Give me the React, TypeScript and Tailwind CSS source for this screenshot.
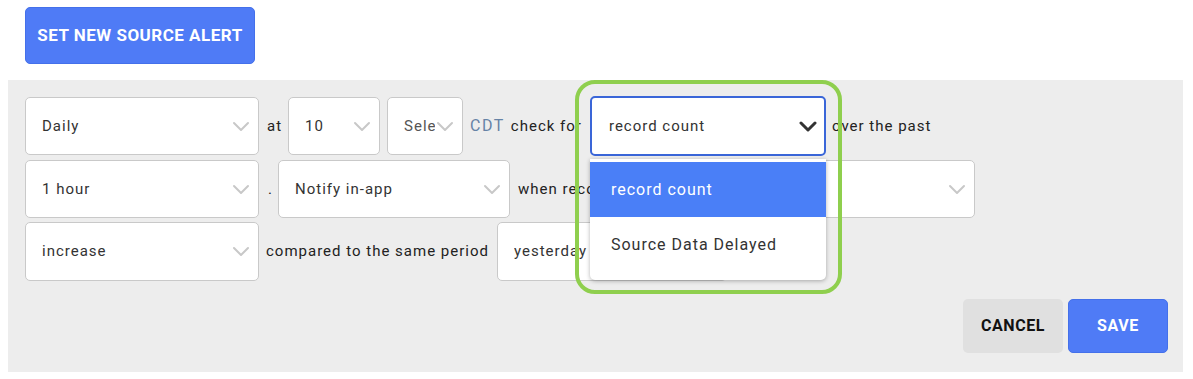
const font = { fontFamily: "Roboto, 'Liberation Sans', sans-serif" }

const Chevron = ({ dark }: { dark?: boolean }) => (
  <svg width="18" height="11" viewBox="0 0 18 11" className="shrink-0">
    <polyline
      points="2,2 9,9 16,2"
      fill="none"
      stroke={dark ? '#333333' : '#c8c8c8'}
      strokeWidth={dark ? 3 : 2}
      strokeLinecap="round"
      strokeLinejoin="round"
    />
  </svg>
)

const Select = ({ value, className, textWidth, muted }: { value: string; className: string; textWidth?: string; muted?: boolean }) => (
  <div className={`h-[58px] flex items-center justify-between bg-white border border-[#c9c9c9] rounded-[5px] pl-[16px] pr-[8px] overflow-hidden shrink-0 ${className}`}>
    <span className={`text-[15px] tracking-[1px] whitespace-nowrap overflow-hidden ${textWidth ?? ''} ${muted ? 'text-[#555]' : 'text-[#333]'}`}>{value}</span>
    <Chevron />
  </div>
)

const Label = ({ children, className = '' }: { children: React.ReactNode; className?: string }) => (
  <span className={`text-[15px] tracking-[1px] text-[#222] whitespace-nowrap shrink-0 ${className}`}>{children}</span>
)

export default function App() {
  return (
    <div className="w-[1193px] h-[379px] bg-white overflow-hidden" style={font}>
      <div className="pt-[7px] pl-[25px]">
        <button className="h-[57px] w-[230px] rounded-[5px] bg-[#4f7bf6] border border-[#4470ea] text-white font-bold text-[17px] tracking-[0.5px]">
          SET NEW SOURCE ALERT
        </button>
      </div>

      <div className="mt-[16px] ml-[8px] w-[1175px] h-[292px] bg-[#ededed] pt-[17px] pl-[17px] pr-[15px]">
        {/* row 1 */}
        <div className="flex items-center h-[58px]">
          <Select value="Daily" className="w-[234px]" />
          <Label className="ml-[8px]">at</Label>
          <Select value="10" className="w-[92px] ml-[6px]" />
          <Select value="Select" className="w-[76px] ml-[7px] !pr-[8px]" textWidth="w-[31px]" muted />
          <span className="ml-[7px] text-[16px] text-[#6683a6] tracking-[1.5px] shrink-0">CDT</span>
          <Label className="ml-[6px]">check for</Label>
          <div className="relative ml-[8px] shrink-0">
            <div className="w-[236px] h-[60px] flex items-center justify-between bg-white border-2 border-[#3a66d8] rounded-[5px] pl-[17px] pr-[7px]">
              <span className="text-[15px] tracking-[1px] text-[#333]">record count</span>
              <Chevron dark />
            </div>
            <div className="absolute left-0 top-[63px] w-[236px] h-[121px] pt-[3px] bg-white rounded-b-[5px] shadow-[0_1px_4px_rgba(0,0,0,0.3)] z-10 overflow-hidden">
              <div className="h-[55px] bg-[#4a7ff7] flex items-center pl-[21px] text-white text-[16px] tracking-[1px]">record count</div>
              <div className="h-[56px] flex items-center pl-[21px] text-[#333] text-[16px] tracking-[1px]">Source Data Delayed</div>
            </div>
            <div className="absolute -left-[15px] -top-[16px] w-[267px] h-[214px] border-[4px] border-[#8fcf4e] rounded-[20px] z-20 pointer-events-none" />
          </div>
          <Label className="ml-[6px]">over the past</Label>
        </div>

        {/* row 2 */}
        <div className="flex items-center w-[950px] h-[58px] mt-[5px]">
          <Select value="1 hour" className="w-[234px]" />
          <Label className="ml-[9px]">.</Label>
          <Select value="Notify in-app" className="w-[232px] ml-[5px]" />
          <Label className="ml-[8px]">when records</Label>
          <Select value="" className="flex-1 ml-[8px] !shrink" />
        </div>

        {/* row 3 */}
        <div className="flex items-center h-[59px] mt-[4px]">
          <Select value="increase" className="w-[234px] !h-[59px]" />
          <Label className="ml-[7px]">compared to the same period</Label>
          <Select value="yesterday" className="w-[230px] ml-[8px] !h-[59px]" />
        </div>

        {/* actions */}
        <div className="flex justify-end gap-[5px] mt-[18px]">
          <button className="h-[54px] w-[100px] rounded-[5px] bg-[#e0e0e0] text-[#111] font-bold text-[16px] tracking-[0.6px]">CANCEL</button>
          <button className="h-[54px] w-[100px] rounded-[5px] bg-[#4f7bf6] border border-[#4470ea] text-white font-bold text-[16px] tracking-[0.6px]">SAVE</button>
        </div>
      </div>
    </div>
  )
}
